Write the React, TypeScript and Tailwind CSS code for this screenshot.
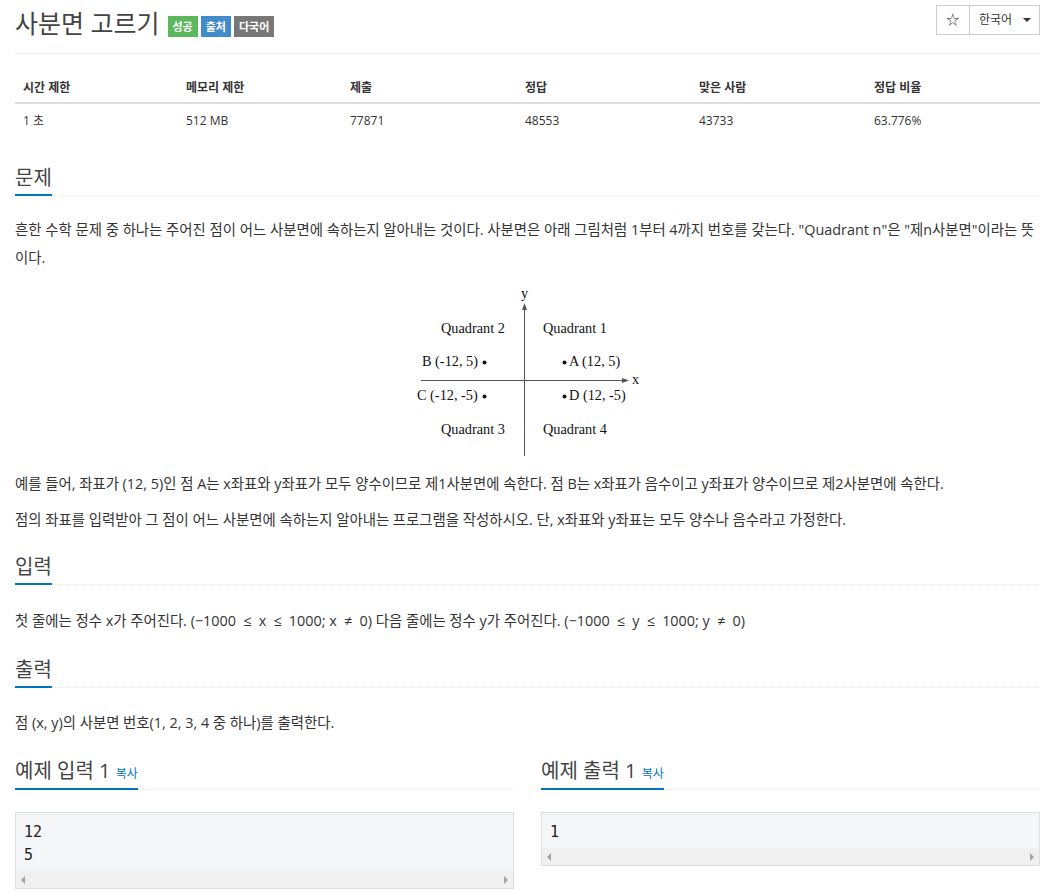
import React from "react";

const font = { fontFamily: '"Open Sans", "Noto Sans CJK KR", sans-serif' };

function Headline({ children }: { children: React.ReactNode }) {
  return (
    <div className="border-b border-dotted border-[#e4e9f0]">
      <h2 className="-mb-px inline-block border-b-2 border-[#0076c0] pb-[2px] text-[20px] leading-[28px] font-normal text-[#444]">
        {children}
      </h2>
    </div>
  );
}

function Quadrants() {
  return (
    <svg width="222" height="172" viewBox="0 0 222 172" className="block">
      <g fontFamily='"Liberation Serif", serif' fontSize="14.3" fill="#111">
        <text x="104" y="12">y</text>
        <text x="215" y="98">x</text>
        <text x="24" y="47">Quadrant 2</text>
        <text x="126" y="47">Quadrant 1</text>
        <text x="5" y="80">B (-12, 5)</text>
        <text x="152" y="80">A (12, 5)</text>
        <text x="0" y="114">C (-12, -5)</text>
        <text x="152" y="114">D (12, -5)</text>
        <text x="24" y="148">Quadrant 3</text>
        <text x="126" y="148">Quadrant 4</text>
      </g>
      <line x1="107.5" y1="22" x2="107.5" y2="170" stroke="#555" strokeWidth="1" />
      <polygon points="107.5,17 105,24 110,24" fill="#555" />
      <line x1="4" y1="94.5" x2="207" y2="94.5" stroke="#555" strokeWidth="1" />
      <polygon points="212,94.5 205,92 205,97" fill="#555" />
      <circle cx="67.5" cy="76.5" r="2" fill="#111" />
      <circle cx="147.5" cy="76.5" r="2" fill="#111" />
      <circle cx="67.5" cy="110.5" r="2" fill="#111" />
      <circle cx="147.5" cy="110.5" r="2" fill="#111" />
    </svg>
  );
}

function SampleBox({ lines }: { lines: string[] }) {
  return (
    <div className="border border-[#dcdfe4] bg-[#f5f6f8]">
      <pre
        className="px-[8px] pt-[8px] pb-[4px] text-[15px] leading-[23px] text-[#222]"
        style={{ fontFamily: '"DejaVu Sans Mono", monospace' }}
      >
        {lines.join("\n")}
      </pre>
      <div className="flex h-[17px] items-center justify-between bg-[#f0f0f0] px-[5px]">
        <span className="h-0 w-0 border-y-[4px] border-r-[4px] border-y-transparent border-r-[#a3a3a3]" />
        <span className="h-0 w-0 border-y-[4px] border-l-[4px] border-y-transparent border-l-[#a3a3a3]" />
      </div>
    </div>
  );
}

function Sample({ title, lines }: { title: string; lines: string[] }) {
  return (
    <div className="flex-1">
      <div className="border-b border-dotted border-[#e4e9f0]">
        <h2 className="-mb-px inline-block border-b-2 border-[#0076c0] pb-[3px] text-[20px] leading-[28px] font-normal text-[#444]">
          {title} <span className="text-[12px] leading-[12px] text-[#0076c0]">복사</span>
        </h2>
      </div>
      <div className="mt-[22px]">
        <SampleBox lines={lines} />
      </div>
    </div>
  );
}

export default function App() {
  const heads = ["시간 제한", "메모리 제한", "제출", "정답", "맞은 사람", "정답 비율"];
  const vals = ["1 초", "512 MB", "77871", "48553", "43733", "63.776%"];
  const cols = "grid grid-cols-[163px_164px_175px_174px_175px_1fr]";

  return (
    <div className="min-h-screen bg-white px-[15px] text-[#333]" style={font}>
      {/* 제목 */}
      <div className="flex items-start justify-between border-b border-[#eee] pb-[11px] pt-[4px]">
        <div className="flex items-center gap-[8px]">
          <h1 className="text-[25px] leading-[38px] font-normal text-[#444]">사분면 고르기</h1>
          <div className="mt-[6px] flex gap-[3px] text-[11px] font-bold text-white">
            <span className="bg-[#5cb85c] px-[5px] leading-[21px]">성공</span>
            <span className="bg-[#428bca] px-[5px] leading-[21px]">출처</span>
            <span className="bg-[#777] px-[5px] leading-[21px]">다국어</span>
          </div>
        </div>
        <div className="mt-[1px] flex h-[30px] border border-[#ccc] text-[12px]">
          <div className="flex w-[33px] items-center justify-center border-r border-[#ccc] text-[13px]">☆</div>
          <div className="flex items-center gap-[11px] pl-[9px] pr-[8px]">
            한국어
            <span className="h-0 w-0 border-x-[4px] border-t-[4px] border-x-transparent border-t-[#333]" />
          </div>
        </div>
      </div>

      {/* 정보 표 */}
      <div className="mt-[25px] text-[12px]">
        <div className={`${cols} border-b-2 border-[#ddd] pb-[5px] font-bold`}>
          {heads.map((h) => (
            <div key={h} className="px-[8px]">{h}</div>
          ))}
        </div>
        <div className={`${cols} pt-[8px] pb-[8px]`}>
          {vals.map((v) => (
            <div key={v} className="px-[8px]">{v}</div>
          ))}
        </div>
      </div>

      {/* 문제 */}
      <div className="mt-[26px]">
        <Headline>문제</Headline>
        <div className="mt-[20px] text-[14.4px] leading-[28px]">
          <p>
            흔한 수학 문제 중 하나는 주어진 점이 어느 사분면에 속하는지 알아내는 것이다. 사분면은 아래 그림처럼 1부터 4까지 번호를 갖는다. "Quadrant n"은 "제n사분면"이라는 뜻이다.
          </p>
          <div className="mt-[14px] flex justify-center">
            <Quadrants />
          </div>
          <p className="mt-[12px]">
            예를 들어, 좌표가 (12, 5)인 점 A는 x좌표와 y좌표가 모두 양수이므로 제1사분면에 속한다. 점 B는 x좌표가 음수이고 y좌표가 양수이므로 제2사분면에 속한다.
          </p>
          <p className="mt-[8px]">
            점의 좌표를 입력받아 그 점이 어느 사분면에 속하는지 알아내는 프로그램을 작성하시오. 단, x좌표와 y좌표는 모두 양수나 음수라고 가정한다.
          </p>
        </div>
      </div>

      {/* 입력 */}
      <div className="mt-[19px]">
        <Headline>입력</Headline>
        <p className="mt-[22px] text-[14.4px] leading-[28px]">
          첫 줄에는 정수 x가 주어진다. (−1000{"\u2002"}≤{"\u2002"}x{"\u2002"}≤{"\u2002"}1000; x{"\u2002"}≠{"\u2002"}0) 다음 줄에는 정수 y가 주어진다. (−1000{"\u2002"}≤{"\u2002"}y{"\u2002"}≤{"\u2002"}1000; y{"\u2002"}≠{"\u2002"}0)
        </p>
      </div>

      {/* 출력 */}
      <div className="mt-[21px]">
        <Headline>출력</Headline>
        <p className="mt-[21px] text-[14.4px] leading-[28px]">점 (x, y)의 사분면 번호(1, 2, 3, 4 중 하나)를 출력한다.</p>
      </div>

      {/* 예제 */}
      <div className="mt-[20px] flex gap-[27px]">
        <Sample title="예제 입력 1" lines={["12", "5"]} />
        <Sample title="예제 출력 1" lines={["1"]} />
      </div>
    </div>
  );
}
